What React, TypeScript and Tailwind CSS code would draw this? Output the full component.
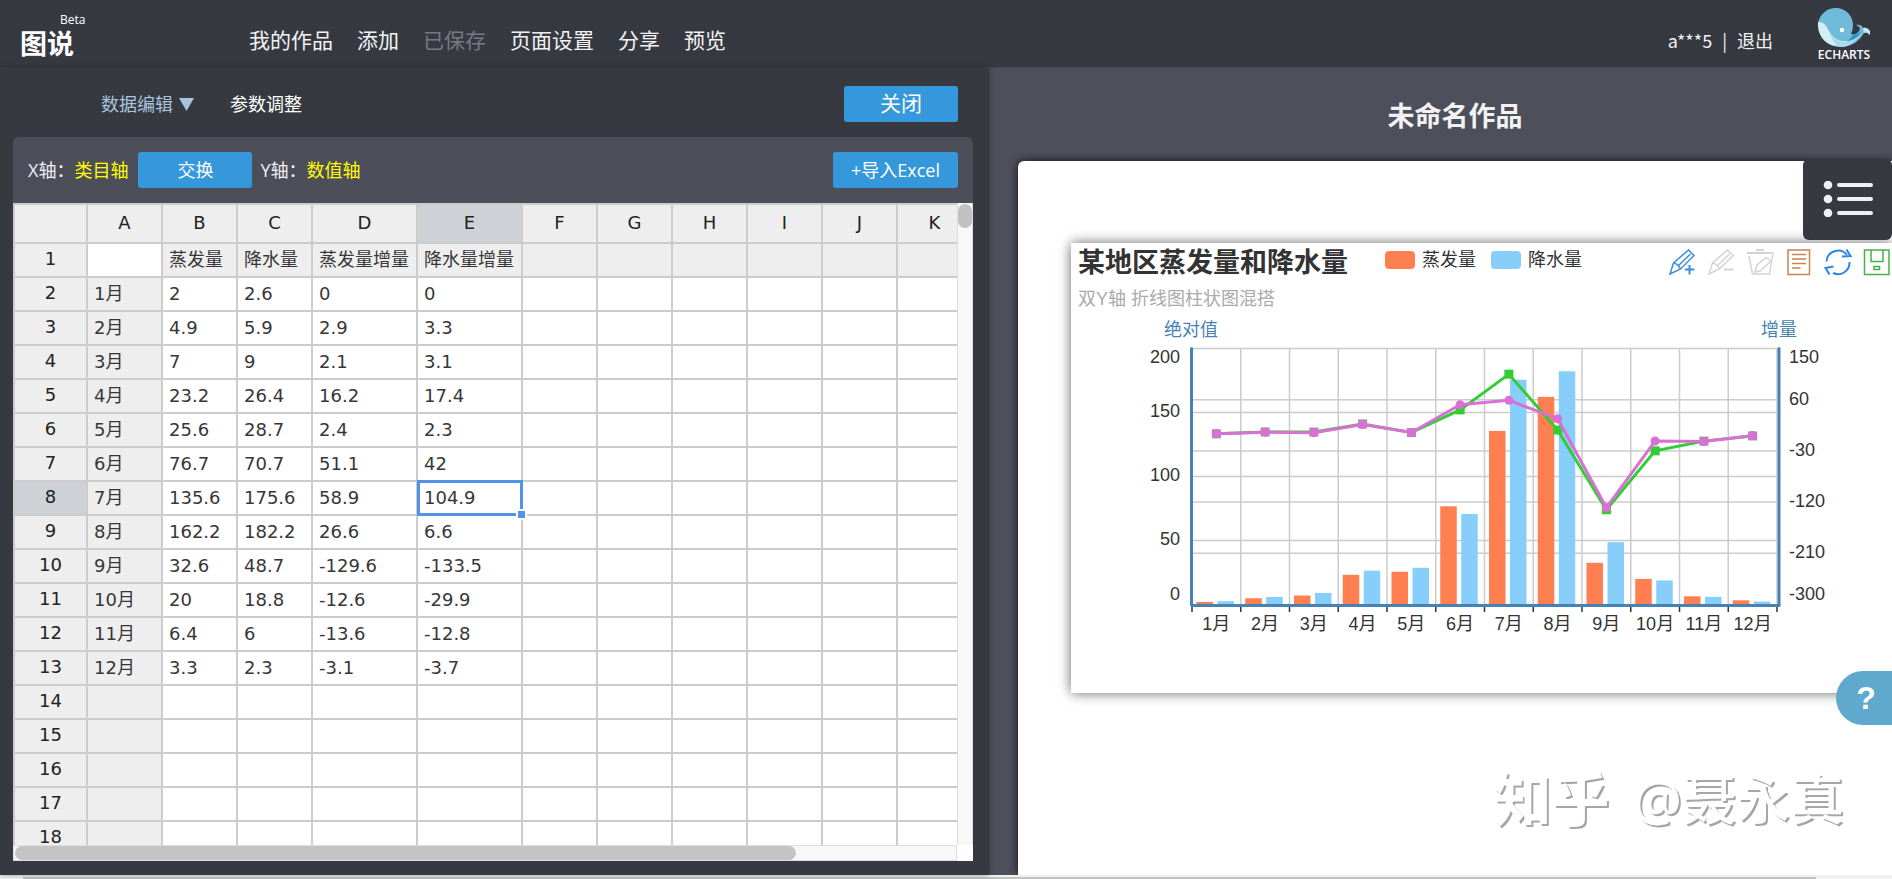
import React from "react";

const COLUMNS = ["A", "B", "C", "D", "E", "F", "G", "H", "I", "J", "K"];
const MONTHS = Array.from({ length: 12 }, (_, i) => `${i + 1}月`);
const EVAPORATION = [2, 4.9, 7, 23.2, 25.6, 76.7, 135.6, 162.2, 32.6, 20, 6.4, 3.3];
const RAIN = [2.6, 5.9, 9, 26.4, 28.7, 70.7, 175.6, 182.2, 48.7, 18.8, 6, 2.3];
const EVAPORATION_DELTA = [0, 2.9, 2.1, 16.2, 2.4, 51.1, 58.9, 26.6, -129.6, -12.6, -13.6, -3.1];
const RAIN_DELTA = [0, 3.3, 3.1, 17.4, 2.3, 42, 104.9, 6.6, -133.5, -29.9, -12.8, -3.7];

const ROWS: string[][] = [
  ["", "蒸发量", "降水量", "蒸发量增量", "降水量增量"],
  ...MONTHS.map((m, i) => [
    m,
    String(EVAPORATION[i]),
    String(RAIN[i]),
    String(EVAPORATION_DELTA[i]),
    String(RAIN_DELTA[i]),
  ]),
  ...Array.from({ length: 5 }, () => [] as string[]),
];

const NAV = ["我的作品", "添加", "已保存", "页面设置", "分享", "预览"];

function WhaleLogo() {
  return (
    <a href="#echarts" className="flex w-[52px] flex-col items-center pt-1 text-[12px] leading-4 font-semibold text-white">
      <svg width="52" height="39" viewBox="0 0 52 39" aria-hidden="true">
        <path d="M0 15C2 6 9 0 18 0c10 0 17 8 17 17 0 4-1 7-2 9 3 1 7 0 9-5 0-2-2-3-4-4 3-1 6 0 7 3 2-1 5 0 7 3v4c-2-2-4-3-6-2-4 7-12 14-23 14C9 39 0 29 0 15z" fill="#6fbbd9" />
        <path d="M0 14c7 0 8 4 11 9 4 7 9 11 19 10-3 3-6 5-11 5C8 37-1 28 0 14z" fill="#d5edf5" />
        <path d="M12 25c5 8 12 10 19 8 6-1 11-6 14-10-4 8-12 16-23 16-4-1-9-8-10-14z" fill="#a5dcec" />
        <path d="M28 33c4-1 6-4 7-7 4 1 7-1 9-4-2 5-6 10-16 11z" fill="#2f93cb" />
        <path d="M45 20c2-1 5 0 7 3v4c-2-2-4-3-6-2z" fill="#c9e8f3" />
        <circle cx="24" cy="22" r="2.2" fill="#fff" />
      </svg>
      ECHARTS
    </a>
  );
}

function Header() {
  return (
    <header className="flex h-17 shrink-0 items-center border-b border-[#454750] bg-[#373941] pr-[22px] pl-5 text-white">
      <div className="relative w-[229px] shrink-0 pt-5">
        <h1 className="text-[27px] leading-9 font-bold">图说</h1>
        <sup className="absolute top-1.5 left-10 text-[12px] leading-4">Beta</sup>
      </div>
      <nav className="flex grow gap-6 pt-3">
        {NAV.map((item) => (
          <a
            key={item}
            href="#nav"
            className={`text-[21px] leading-8 ${item === "已保存" ? "text-[#777985]" : "text-[#f2f2f4]"}`}
          >
            {item}
          </a>
        ))}
      </nav>
      <div className="mr-[45px] flex gap-2.5 pt-3 font-['Noto_Sans_CJK_SC',sans-serif] text-[18px] leading-7 text-[#f2f2f4]">
        <span>a***5</span>
        <span>|</span>
        <a href="#logout">退出</a>
      </div>
      <WhaleLogo />
    </header>
  );
}

function Sheet() {
  return (
    <div className="grid min-h-0 flex-1 grid-cols-[minmax(0,1fr)_16px] grid-rows-[minmax(0,1fr)_16px] bg-white">
      <div className="overflow-hidden">
        <table className="w-[960px] table-fixed border-separate border-spacing-0 font-['DejaVu_Sans','Noto_Sans_CJK_SC',sans-serif] text-[18px] text-[#373737]">
          <colgroup>
            <col className="w-[75px]" />
            {COLUMNS.map((c) => (
              <col key={c} className={c === "D" || c === "E" ? "w-[105px]" : "w-[75px]"} />
            ))}
          </colgroup>
          <thead>
            <tr className="h-[41px]">
              <th className="border-2 border-[#ccc] bg-[#eee]" />
              {COLUMNS.map((c) => (
                <th
                  key={c}
                  scope="col"
                  className={`border-t-2 border-r-2 border-b-2 border-[#ccc] p-0 pb-0.5 text-center font-normal text-[#222] ${c === "E" ? "bg-[#ced2d7]" : "bg-[#eee]"}`}
                >
                  {c}
                </th>
              ))}
            </tr>
          </thead>
          <tbody>
            {ROWS.map((row, r) => (
              <tr key={r} className="h-[34px]">
                <th
                  scope="row"
                  className={`border-r-2 border-b-2 border-l-2 border-[#ccc] p-0 pb-0.5 leading-7 font-normal text-[#222] ${r === 7 ? "bg-[#ced2d7]" : "bg-[#eee]"}`}
                >
                  {r + 1}
                </th>
                {COLUMNS.map((c, i) => (
                  <td
                    key={c}
                    className={`relative border-r-2 border-b-2 border-[#ccc] pt-0 pr-0 pb-px pl-1.5 leading-7 whitespace-nowrap ${(r === 0) !== (i === 0) ? "bg-[#eee]" : "bg-white"}`}
                  >
                    {row[i] ?? ""}
                    {r === 7 && c === "E" && (
                      <span className="absolute -inset-y-0.5 -right-0.5 -left-px z-10 border-3 border-[#5292e7]">
                        <span className="absolute -right-[7px] -bottom-[7px] size-[11px] border-2 border-white bg-[#5292e7]" />
                      </span>
                    )}
                  </td>
                ))}
              </tr>
            ))}
          </tbody>
        </table>
      </div>
      <div className="border-x border-[#ddd] bg-[#f8f8f8] pt-px">
        <div className="h-6 rounded-full bg-[#c1c1c1]" />
      </div>
      <div className="border border-[#ddd] bg-[#f8f8f8] pl-px">
        <div className="h-full w-[83%] rounded-full bg-[#c4c4c4]" />
      </div>
    </div>
  );
}

function Editor() {
  return (
    <section className="z-10 flex min-h-0 flex-col bg-[#373941] pr-4 pb-[14px] pl-[13px] shadow-[0_0_5px_rgba(0,0,0,0.4)]">
      <div className="flex h-[69px] shrink-0 items-center pt-[3px] pr-[15px] pl-[88px] text-[18px] text-white">
        <button type="button" className="flex items-center gap-1.5 text-[#a8c4dc]">
          数据编辑
          <svg width="15" height="13" viewBox="0 0 15 13" aria-hidden="true">
            <path d="M0 0h15L7.500 13z" fill="currentColor" />
          </svg>
        </button>
        <button type="button" className="ml-9">参数调整</button>
        <button type="button" className="ml-auto h-9 w-[114px] rounded-[3px] bg-[#3498db] text-[21px]">
          关闭
        </button>
      </div>
      <div className="flex min-h-0 flex-1 flex-col overflow-hidden rounded-t-md bg-[#4c4e5a]">
        <div className="flex h-[66px] shrink-0 items-center pr-[15px] pl-[15px] text-[18px] text-[#f0f0f4]">
          <span>X轴：</span>
          <span className="text-[#ffff00]">类目轴</span>
          <button type="button" className="mr-2 ml-2.5 h-9 w-[114px] rounded-[3px] bg-[#3498db] text-white">
            交换
          </button>
          <span>Y轴：</span>
          <span className="text-[#ffff00]">数值轴</span>
          <button type="button" className="ml-auto h-9 w-[125px] rounded-[3px] bg-[#3498db] text-white">
            +导入Excel
          </button>
        </div>
        <Sheet />
      </div>
    </section>
  );
}

const LEFT = 121;
const TOP = 33.5;
const BOTTOM = 289.5;
const STEP = 48.75;
const RIGHT = LEFT + STEP * 12;

const amountY = (v: number) => BOTTOM - (v / 200) * (BOTTOM - TOP);
const deltaY = (v: number) => TOP + ((150 - v) / 450) * (BOTTOM - TOP);
const centreX = (i: number) => LEFT + STEP * (i + 0.5);
const linePoints = (data: number[]) => data.map((v, i) => `${centreX(i)},${deltaY(v)}`).join(" ");

const AMOUNT_LABELS: [string, number][] = [["200", 48], ["150", 102], ["100", 166], ["50", 230], ["0", 285]];
const DELTA_LABELS: [string, number][] = [["150", 48], ["60", 90], ["-30", 141], ["-120", 192], ["-210", 243], ["-300", 285]];

function Chart() {
  return (
    <svg
      viewBox="0 0 821 330"
      className="block w-full font-['Liberation_Sans','Noto_Sans_CJK_SC',sans-serif] text-[18px]"
      role="img"
      aria-label="某地区蒸发量和降水量"
    >
      <g stroke="#ccc" strokeWidth="1.500">
        {[200, 150, 100, 50].map((v) => (
          <line key={v} x1={LEFT} x2={RIGHT} y1={amountY(v)} y2={amountY(v)} />
        ))}
        {[60, -30, -120, -210].map((v) => (
          <line key={v} x1={LEFT} x2={RIGHT} y1={deltaY(v)} y2={deltaY(v)} />
        ))}
        {MONTHS.map((m, i) => (
          <line key={m} x1={LEFT + STEP * (i + 1)} x2={LEFT + STEP * (i + 1)} y1={TOP} y2={BOTTOM} />
        ))}
      </g>
      {MONTHS.map((m, i) => (
        <g key={m}>
          <rect x={LEFT + STEP * i + 4.5} y={amountY(EVAPORATION[i])} width="16.500" height={BOTTOM - amountY(EVAPORATION[i])} fill="#ff7f50" />
          <rect x={LEFT + STEP * i + 25.5} y={amountY(RAIN[i])} width="16.500" height={BOTTOM - amountY(RAIN[i])} fill="#87cefa" />
        </g>
      ))}
      <g stroke="#333" strokeWidth="1.500">
        {[...MONTHS, ""].map((m, i) => (
          <line key={m} x1={LEFT + STEP * i} x2={LEFT + STEP * i} y1={BOTTOM} y2={BOTTOM + 7.5} />
        ))}
      </g>
      <g stroke="#4682b4" strokeWidth="3" strokeLinecap="round">
        <line x1={LEFT - 0.5} x2={LEFT - 0.5} y1={TOP} y2={BOTTOM} />
        <line x1={LEFT} x2={RIGHT + 2} y1={BOTTOM + 1} y2={BOTTOM + 1} />
        <line x1={RIGHT + 2} x2={RIGHT + 2} y1={TOP} y2={BOTTOM} />
      </g>
      <polyline points={linePoints(RAIN_DELTA)} fill="none" stroke="#32cd32" strokeWidth="3" />
      {RAIN_DELTA.map((v, i) => (
        <rect key={i} x={centreX(i) - 4.5} y={deltaY(v) - 4.5} width="9" height="9" fill={[5, 6, 7, 8, 9].includes(i) ? "#32cd32" : "#8f9a8f"} />
      ))}
      <polyline points={linePoints(EVAPORATION_DELTA)} fill="none" stroke="#da70d6" strokeWidth="3" />
      {EVAPORATION_DELTA.map((v, i) => (
        <circle key={i} cx={centreX(i)} cy={deltaY(v)} r="4.500" fill="#da70d6" />
      ))}
      <g fill="#4682b4" textAnchor="middle">
        <text x="120" y="21">绝对值</text>
        <text x="708" y="21">增量</text>
      </g>
      <g fill="#333">
        {AMOUNT_LABELS.map(([t, y]) => (
          <text key={t} x="109" y={y} textAnchor="end">{t}</text>
        ))}
        {DELTA_LABELS.map(([t, y]) => (
          <text key={t} x="718" y={y}>{t}</text>
        ))}
        {MONTHS.map((m, i) => (
          <text key={m} x={centreX(i)} y="315" textAnchor="middle">{m}</text>
        ))}
      </g>
    </svg>
  );
}

const TOOLS: { label: string; color: string; art: React.ReactNode }[] = [
  {
    label: "辅助线开关",
    color: "text-[#3b8ede]",
    art: (
      <>
        <path d="M2 26l3.500-11L20.500 2l5.500 5.500L12.500 21z" />
        <path d="M10.500 17.500L22.500 6M5.500 15c3 .5 5.500 2.500 7 6" />
        <path d="M17 21.500h9.500M21.500 17v9.500" strokeWidth="2" />
      </>
    ),
  },
  {
    label: "删除辅助线",
    color: "text-[#d4d4d4]",
    art: (
      <>
        <path d="M2 26l3.500-11L20.500 2l5.500 5.500L12.500 21z" />
        <path d="M10.500 17.500L22.500 6M5.500 15c3 .5 5.500 2.500 7 6" />
        <path d="M17 21.500h9.500" strokeWidth="2" />
      </>
    ),
  },
  {
    label: "清空辅助线",
    color: "text-[#d4d4d4]",
    art: (
      <>
        <path d="M1 5h26M10 2h8" strokeWidth="2" />
        <path d="M3 8l3.500 18h17L27 5" />
        <path d="M9 24l2-7 9-7.500 5 3.500L14 23z" />
      </>
    ),
  },
  {
    label: "数据视图",
    color: "text-[#c9834f]",
    art: (
      <>
        <path d="M3 2h21.500v24.500H3z" />
        <path d="M7 6.500h14M7 11h14M7 15.500h14M7 20h8.500" />
      </>
    ),
  },
  {
    label: "还原",
    color: "text-[#2f86e0]",
    art: (
      <>
        <path d="M2.500 13.500A11.500 11.500 0 0 1 23 7M25.500 14A11.500 11.500 0 0 1 9 25" strokeWidth="2" />
        <path d="M22.500 1.500l4 6.500-8.500.5M5.500 26.500L1.500 20l8-1.500" strokeWidth="2" />
      </>
    ),
  },
  {
    label: "保存为图片",
    color: "text-[#45b045]",
    art: (
      <>
        <path d="M1.500 2H26v24.500H1.500z" />
        <path d="M8 2v11.500h12V2M11 18.500h5.500v3H11z" />
      </>
    ),
  },
];

function ChartCard() {
  return (
    <article className="h-[450px] bg-white pt-0.5 font-['Liberation_Sans','Noto_Sans_CJK_SC',sans-serif] text-[18px] text-[#333] shadow-[0_0_12px_rgba(0,0,0,0.6)]">
      <div className="flex items-start pl-[7px]">
        <h3 className="text-[27px] leading-9 font-bold">某地区蒸发量和降水量</h3>
        <ul className="ml-[37px] flex gap-[15px] pt-px leading-7">
          <li className="flex items-center gap-[7px]">
            <span className="h-[18px] w-[30px] rounded bg-[#ff7f50]" />
            蒸发量
          </li>
          <li className="flex items-center gap-[7px]">
            <span className="h-[18px] w-[30px] rounded bg-[#87cefa]" />
            降水量
          </li>
        </ul>
        <div className="mr-px ml-auto flex gap-[11px] pt-[3px]">
          {TOOLS.map((t) => (
            <button key={t.label} type="button" aria-label={t.label} className={t.color}>
              <svg width="28" height="28" viewBox="0 0 28 28" fill="none" stroke="currentColor" strokeWidth="1.500">
                {t.art}
              </svg>
            </button>
          ))}
        </div>
      </div>
      <p className="pt-0.5 pl-[7px] leading-8 text-[#aaa]">双Y轴 折线图柱状图混搭</p>
      <Chart />
    </article>
  );
}

function Preview() {
  return (
    <section className="relative flex min-h-0 flex-col overflow-hidden bg-[#4d4f5b] pl-[29px]">
      <h2 className="flex h-[93px] shrink-0 items-center justify-center pt-1 text-[27px] font-bold text-[#f2f2f4]">
        未命名作品
      </h2>
      <div className="flex-1 rounded-tl-md bg-white pt-[82px] pl-[53px] shadow-[0_0_9px_rgba(0,0,0,0.8)]">
        <ChartCard />
      </div>
      <button type="button" aria-label="菜单" className="absolute top-[91px] right-0 flex h-[81px] w-[89px] items-center justify-center rounded-md bg-[#373941] pb-0.5">
        <svg width="50" height="36" viewBox="0 0 50 36" fill="#f0eff6" aria-hidden="true">
          {[4, 18, 32].map((y) => (
            <g key={y}>
              <circle cx="5" cy={y} r="4.300" />
              <rect x="14" y={y - 2} width="36" height="4" rx="2" />
            </g>
          ))}
        </svg>
      </button>
      <button type="button" aria-label="帮助" className="absolute top-[603px] right-0 h-[54px] w-14 rounded-l-full bg-[#5fa9cc] pl-1 font-['Liberation_Sans',sans-serif] text-[32px] font-bold text-white">
        ?
      </button>
      <p className="absolute right-12 bottom-10 flex items-center gap-6 text-[54px] leading-[72px] font-medium whitespace-nowrap text-white [text-shadow:2px_2px_0_#a6a6a6]">
        <span className="text-[58px] font-bold">知乎</span>
        <span>@聂永真</span>
      </p>
    </section>
  );
}

export default function App() {
  return (
    <div className="flex h-screen flex-col overflow-hidden bg-[#4d4f5b] font-['Open_Sans','Noto_Sans_CJK_SC',sans-serif]">
      <Header />
      <main className="grid min-h-0 flex-1 grid-cols-[989fr_903fr] grid-rows-[minmax(0,1fr)]">
        <Editor />
        <Preview />
      </main>
      <div className="h-1 shrink-0 bg-[#f1f1f1] pt-0.5 pr-[76px] pl-[23px]">
        <div className="h-0.5 bg-[#c1c1c1]" />
      </div>
    </div>
  );
}
